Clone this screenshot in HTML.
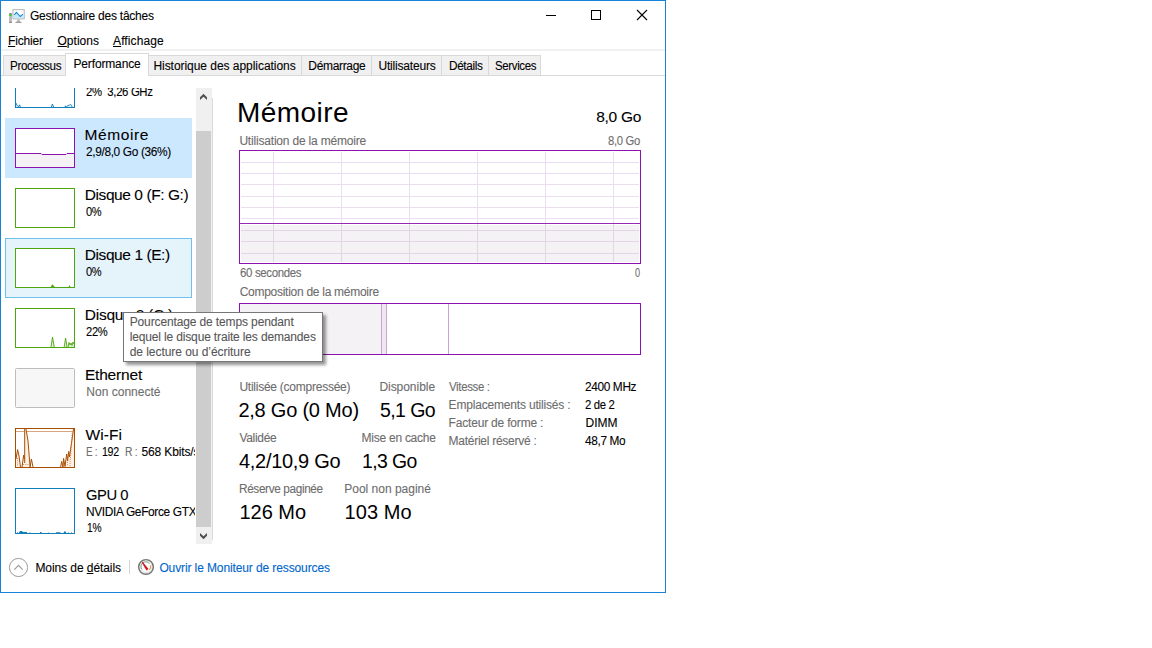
<!DOCTYPE html>
<html lang="fr">
<head>
<meta charset="utf-8">
<title>Gestionnaire des tâches</title>
<style>
html,body{margin:0;padding:0;background:#fff;}
body{width:1152px;height:648px;overflow:hidden;position:relative;font-family:"Liberation Sans",sans-serif;font-size:12px;color:#000;}
.t{position:absolute;white-space:nowrap;line-height:1;transform-origin:0 0;-webkit-text-stroke:0.1px;}
.t u{text-decoration-thickness:1px;text-underline-offset:1px;}
.abs{position:absolute;}
#win{position:absolute;left:0;top:0;width:664px;height:591px;border:1px solid #1883d7;background:#fff;}
.tab{position:absolute;top:55px;height:20px;border:1px solid #d9d9d9;border-bottom:none;background:#f0f0f0;}
.thumb{position:absolute;left:15px;width:58px;height:38px;border:1px solid;background:#fff;overflow:hidden;}
#list{position:absolute;left:1px;top:88px;width:194px;height:456px;overflow:hidden;}
#listin{position:absolute;left:-1px;top:-88px;width:300px;height:700px;}
svg{position:absolute;overflow:visible;}
</style>
</head>
<body>
<div id="win"></div>

<!-- title bar icon -->
<svg style="left:8px;top:8px;" width="18" height="16" viewBox="0 0 18 16">
 <rect x="1" y="5" width="3" height="10" rx="0.8" fill="#bdbdbd"/>
 <rect x="1" y="13.8" width="3" height="1.2" rx="0.4" fill="#8c8c8c"/>
 <rect x="1.5" y="5.2" width="2" height="1.2" fill="#7d7188"/>
 <rect x="1.3" y="6.4" width="2.4" height="1.7" fill="#22d41c"/>
 <rect x="4.3" y="1" width="12.6" height="10.6" rx="0.8" fill="#c2c2c2"/>
 <rect x="5.6" y="2.2" width="10" height="8" fill="#fff"/>
 <path d="M5.6 6.6L6.6 6.4L8.4 4.2L12.3 8.6L14.8 6.3L15.6 6.3V10.2H5.6Z" fill="#c3ebfc"/>
 <path d="M5.9 6.6L6.8 6.3L8.4 4.3L12.3 8.5L14.9 6.2" fill="none" stroke="#1d86cf" stroke-width="1.1"/>
 <rect x="9.4" y="11.6" width="2.2" height="2" fill="#ababab"/>
 <path d="M7 15C7.6 13.7 9 13.3 10.5 13.3S13.4 13.7 14 15Z" fill="#a3a3a3"/>
</svg>
<!-- window controls -->
<svg style="left:540px;top:5px;" width="120" height="22" viewBox="0 0 120 22">
 <path d="M6 10.5H16" stroke="#000" stroke-width="1" fill="none"/>
 <rect x="51.5" y="5.5" width="9" height="9" stroke="#000" stroke-width="1" fill="none"/>
 <path d="M97 5L107 15M107 5L97 15" stroke="#000" stroke-width="1.1" fill="none"/>
</svg>

<!-- menu separator -->
<div class="abs" style="left:1px;top:49px;width:664px;height:2px;background:#f1f1f1;"></div>

<!-- tabs -->
<div class="tab" style="left:3px;width:62px;"></div>
<div class="tab" style="left:148px;width:152px;"></div>
<div class="tab" style="left:301px;width:69px;"></div>
<div class="tab" style="left:371px;width:69px;"></div>
<div class="tab" style="left:441px;width:46px;"></div>
<div class="tab" style="left:488px;width:51px;"></div>
<div class="abs" style="left:1px;top:75px;width:664px;height:1px;background:#d9d9d9;"></div>
<div class="tab" style="left:65px;top:53px;width:82px;height:22px;background:#fff;"></div>

<!-- left list -->
<div id="list"><div id="listin">
 <div class="abs" style="left:5px;top:118px;width:187px;height:60px;background:#cce8ff;"></div>
 <div class="abs" style="left:5px;top:238px;width:185px;height:58px;background:#e5f3fb;border:1px solid #70c0e7;"></div>
 <!-- CPU -->
 <div class="thumb" style="top:68px;border-color:#117dbb;">
  <svg width="58" height="38" viewBox="0 0 58 38"><path d="M0 34L0.8 36L2 37.4L2.8 37.4L3.6 35.8L4.5 38.5H35L36.4 35L37.8 38.5H49L49.4 36.8L49.8 38.5L51 37.4L52 36.5L53.3 36.3L54.4 35.2L55.5 36.5L56.5 38.5H58V38H0Z" fill="#dcebf5"/><path d="M0 34L0.8 36L2 37.4L2.8 37.4L3.6 35.8L4.5 38.5H35L36.4 35L37.8 38.5H49L49.4 36.8L49.8 38.5L51 37.4L52 36.5L53.3 36.3L54.4 35.2L55.5 36.5L56.5 38.5H58" fill="none" stroke="#117dbb" stroke-width="0.9"/></svg>
 </div>
 <!-- Memory -->
 <div class="thumb" style="top:128px;border-color:#8b12ae;">
  <svg width="58" height="38" viewBox="0 0 58 38"><path d="M0 38V24.5H25L26 25.5H50L51 24.5H58V38Z" fill="#f4f2f4"/><path d="M0 24.5H25L26 25.5H50L51 24.5H58" fill="none" stroke="#8b12ae" stroke-width="1"/></svg>
 </div>
 <!-- Disk 0 -->
 <div class="thumb" style="top:188px;border-color:#4da60c;"></div>
 <!-- Disk 1 -->
 <div class="thumb" style="top:248px;border-color:#4da60c;">
  <svg width="58" height="38" viewBox="0 0 58 38"><path d="M35 38L36.3 35.6L38.5 38ZM52.8 38L53.5 36.6L54.2 38Z" fill="#4da60c" stroke="#4da60c" stroke-width="0.5"/></svg>
 </div>
 <!-- Disk 2 -->
 <div class="thumb" style="top:308px;border-color:#4da60c;">
  <svg width="58" height="38" viewBox="0 0 58 38"><path d="M35 38L36.5 28L38.2 38ZM48.2 38L49.6 29L51 38ZM52 38L53 33.5L54 36L55 34L56 36.5L57 33L58 35V38Z" fill="#dcefd0"/><path d="M35 38L36.5 28L38.2 38M48.2 38L49.6 29L51 38M52 38L53 33.5L54 36L55 34L56 36.5L57 33L58 35" fill="none" stroke="#4da60c" stroke-width="0.9"/></svg>
 </div>
 <!-- Ethernet -->
 <div class="thumb" style="top:368px;border-color:#bdbdbd;background:#f7f7f7;border-radius:1.5px;"></div>
 <!-- Wi-Fi -->
 <div class="thumb" style="top:428px;border-color:#a74f01;">
  <svg width="58" height="38" viewBox="0 0 58 38">
   <path d="M0 2.5H56" stroke="#d8a780" stroke-width="1" fill="none"/>
   <path d="M0 38V30L1.6 20.6L3 27L4.5 38ZM6 38L7.7 26L8.7 26V0H10L12 12L14.1 38ZM45 38L45.7 32.4L47 38L47.6 29.4L49 37L50.7 25L51.6 32L52.7 22.4L53.5 28L57.5 0H58V38Z" fill="#fcf1e7"/>
   <path d="M0 30L1.6 20.6L3 27L4.5 38M6 38L7.7 26L8.3 30M8.7 0V34M10 0L12 12L14.1 38L15.4 30L17 38M44.6 38L45.7 32.4L47 38L47.6 29.4L49 37.5L50.7 25L51.6 32L52.7 22.4L53.5 28L57.5 0" fill="none" stroke="#a74f01" stroke-width="1"/>
   <path d="M53.9 37L56.4 1" fill="none" stroke="#e0703a" stroke-width="0.8" stroke-dasharray="1 1"/>
   <path d="M1.5 29V37M7 35.5H14M51.5 33V37" fill="none" stroke="#e0703a" stroke-width="0.8" stroke-dasharray="1 1.2"/>
  </svg>
 </div>
 <!-- GPU -->
 <div class="thumb" style="top:488px;height:44px;border-color:#117dbb;">
  <svg width="58" height="44" viewBox="0 0 58 44"><path d="M1 44L1.5 42.8L2 44ZM3 44L3.6 42.6L4 42H6.5V43H11V44ZM13.4 44L14 43L14.6 44ZM24 44V43H25.5V44ZM32 44L32.4 43L32.8 44ZM40 44V43.2H44.5V44ZM47.4 44L48.5 42.2L50 42.8V43.4L50.5 44ZM52 44L52.5 43L53 44ZM55 44L55.5 43L56 44Z" fill="#117dbb"/></svg>
 </div>
<div class="t" id="c1" style="left:84.82px;top:67.08px;font-size:15.5px;letter-spacing:-0.480px;color:#000;transform:scaleX(0.9765);">Processeur</div>
<div class="t" id="c2" style="left:86.10px;top:86.04px;font-size:12.0px;letter-spacing:-0.360px;color:#000;transform:scaleX(0.9457);">2%&nbsp; 3,26 GHz</div>
<div class="t" id="i1" style="left:84.50px;top:127.08px;font-size:15.5px;letter-spacing:0.588px;color:#000;">Mémoire</div>
<div class="t" id="j1" style="left:86.00px;top:146.04px;font-size:12.0px;letter-spacing:-0.360px;color:#000;transform:scaleX(0.9909);">2,9/8,0 Go (36%)</div>
<div class="t" id="i2" style="left:84.80px;top:187.08px;font-size:15.5px;letter-spacing:-0.426px;color:#000;">Disque 0 (F: G:)</div>
<div class="t" id="j2" style="left:86.00px;top:206.04px;font-size:12.0px;letter-spacing:-0.360px;color:#000;transform:scaleX(0.9241);">0%</div>
<div class="t" id="i3" style="left:84.80px;top:247.08px;font-size:15.5px;letter-spacing:-0.424px;color:#000;">Disque 1 (E:)</div>
<div class="t" id="j3" style="left:86.00px;top:266.04px;font-size:12.0px;letter-spacing:-0.360px;color:#000;transform:scaleX(0.9241);">0%</div>
<div class="t" id="i4" style="left:84.80px;top:307.08px;font-size:15.5px;letter-spacing:-0.245px;color:#000;">Disque 2 (C:)</div>
<div class="t" id="j4" style="left:86.00px;top:326.04px;font-size:12.0px;letter-spacing:-0.360px;color:#000;transform:scaleX(0.9311);">22%</div>
<div class="t" id="i5" style="left:84.90px;top:367.08px;font-size:15.5px;letter-spacing:-0.184px;color:#000;">Ethernet</div>
<div class="t" id="j5" style="left:86.30px;top:386.04px;font-size:12.0px;letter-spacing:0.011px;color:#6d6d6d;">Non connecté</div>
<div class="t" id="i6" style="left:85.50px;top:427.08px;font-size:15.5px;letter-spacing:0.099px;color:#000;">Wi-Fi</div>
<div class="t" id="i7" style="left:85.50px;top:487.08px;font-size:15.5px;letter-spacing:-0.480px;color:#000;transform:scaleX(0.9539);">GPU 0</div>
<div class="t" id="j7" style="left:86.30px;top:506.04px;font-size:12.0px;letter-spacing:-0.360px;color:#000;transform:scaleX(0.9946);">NVIDIA GeForce GTX 1060</div>
<div class="t" id="k7" style="left:86.90px;top:522.04px;font-size:12.0px;letter-spacing:-0.360px;color:#000;transform:scaleX(0.8548);">1%</div>
<div class="t" id="w1" style="left:86.30px;top:446.04px;font-size:12.0px;letter-spacing:-0.360px;color:#6d6d6d;transform:scaleX(0.8224);">E :</div>
<div class="t" id="w2" style="left:102.30px;top:446.04px;font-size:12.0px;letter-spacing:-0.360px;color:#000;transform:scaleX(0.8865);">192</div>
<div class="t" id="w3" style="left:124.50px;top:446.04px;font-size:12.0px;letter-spacing:-0.360px;color:#6d6d6d;transform:scaleX(0.8543);">R :</div>
<div class="t" id="w4" style="left:141.50px;top:446.04px;font-size:12.0px;letter-spacing:-0.137px;color:#000;">568 Kbits/s</div>
</div></div>

<!-- scrollbar -->
<div class="abs" style="left:196px;top:88px;width:16px;height:456px;background:#f0f0f0;"></div>
<div class="abs" style="left:212px;top:98px;width:1px;height:442px;background:#dadada;"></div>
<div class="abs" style="left:196px;top:131px;width:15px;height:396px;background:#cdcdcd;"></div>
<svg style="left:196px;top:88px;" width="16" height="456" viewBox="0 0 16 456">
 <path d="M4 9.3L7.5 5.8L11 9.3V12L7.5 8.8L4 12Z" fill="#505050"/>
 <path d="M4 445L7.5 448.2L11 445V447.7L7.5 451.2L4 447.7Z" fill="#505050"/>
</svg>

<!-- main graph -->
<svg style="left:239px;top:150px;" width="402" height="114" viewBox="0 0 402 114">
 <rect x="0.5" y="0.5" width="401" height="113" fill="#fff"/>
 <rect x="2" y="75" width="398" height="37" fill="#f4f2f4"/>
 <g stroke="#ecdef0" stroke-width="1" fill="none">
  <path d="M2 12.5H400M2 23.5H400M2 34.5H400M2 46.5H400M2 57.5H400M2 68.5H400"/>
  <path d="M34.5 2V73M102.5 2V73M170.5 2V73M238.5 2V73M306.5 2V73M374.5 2V73"/>
 </g>
 <g stroke="#e2d6e6" stroke-width="1" fill="none">
  <path d="M2 80.5H400M2 91.5H400M2 103.5H400"/>
  <path d="M34.5 74V112M102.5 74V112M170.5 74V112M238.5 74V112M306.5 74V112M374.5 74V112"/>
 </g>
 <path d="M1 73.5H401" stroke="#9528b4" stroke-width="1" fill="none"/>
 <rect x="0.5" y="0.5" width="401" height="113" fill="none" stroke="#8b12ae" stroke-width="1"/>
</svg>

<!-- composition bar -->
<svg style="left:239px;top:303px;" width="402" height="52" viewBox="0 0 402 52">
 <rect x="0.5" y="0.5" width="401" height="51" fill="#fff"/>
 <rect x="1" y="1" width="141.5" height="50" fill="#f4f2f4"/>
 <rect x="142.5" y="1" width="5" height="50" fill="#efe8f1"/>
 <path d="M142.5 0V52M147.5 0V52M209.5 0V52" stroke="#caa2d9" stroke-width="1" fill="none"/>
 <rect x="0.5" y="0.5" width="401" height="51" fill="none" stroke="#8b12ae" stroke-width="1"/>
</svg>

<!-- bottom bar -->
<svg style="left:8px;top:557px;" width="150" height="22" viewBox="0 0 150 22">
 <circle cx="10.5" cy="10.5" r="9.1" fill="#fff" stroke="#9c9c9c" stroke-width="1"/>
 <path d="M6.3 12.6L10.5 8.4L14.7 12.6" fill="none" stroke="#9c9c9c" stroke-width="1.2"/>
 <path d="M121.5 3V17" stroke="#d4d4d4" stroke-width="1"/>
 <circle cx="138" cy="10" r="7.3" fill="#f6f4f1" stroke="#747474" stroke-width="1.5"/>
 <circle cx="138" cy="9.6" r="5.9" fill="#fdfdfd" stroke="#d8d8d8" stroke-width="0.7"/>
 <path d="M134 12.4A4.3 4.3 0 0 1 141.4 6.6" fill="none" stroke="#6f9a78" stroke-width="0.9"/>
 <path d="M142.3 8.4A4.4 4.4 0 0 1 141.4 12.9" fill="none" stroke="#f08a28" stroke-width="1"/>
 <path d="M133.7 5.3L134.6 4.7L140.5 12L138.4 13.5Z" fill="#d3141c"/>
</svg>

<!-- tooltip -->
<div class="abs" style="left:123px;top:312px;width:198px;height:48px;background:#fff;border:1px solid #767676;box-shadow:3px 3px 3px rgba(0,0,0,0.42);"></div>

<div class="t" id="title" style="left:30.00px;top:10.04px;font-size:12.0px;letter-spacing:-0.250px;color:#000;">Gestionnaire des tâches</div>
<div class="t" id="m1" style="left:8.00px;top:35.04px;font-size:12.0px;letter-spacing:-0.168px;color:#000;"><u>F</u>ichier</div>
<div class="t" id="m2" style="left:57.50px;top:35.04px;font-size:12.0px;letter-spacing:0.024px;color:#000;"><u>O</u>ptions</div>
<div class="t" id="m3" style="left:113.00px;top:35.04px;font-size:12.0px;letter-spacing:0.107px;color:#000;"><u>A</u>ffichage</div>
<div class="t" id="tb1" style="left:9.50px;top:60.04px;font-size:12.0px;letter-spacing:-0.360px;color:#000;transform:scaleX(0.9691);">Processus</div>
<div class="t" id="tb2" style="left:73.50px;top:58.04px;font-size:12.0px;letter-spacing:-0.152px;color:#000;">Performance</div>
<div class="t" id="tb3" style="left:153.40px;top:60.04px;font-size:12.0px;letter-spacing:-0.043px;color:#000;">Historique des applications</div>
<div class="t" id="tb4" style="left:308.30px;top:60.04px;font-size:12.0px;letter-spacing:-0.331px;color:#000;">Démarrage</div>
<div class="t" id="tb5" style="left:378.40px;top:60.04px;font-size:12.0px;letter-spacing:-0.177px;color:#000;">Utilisateurs</div>
<div class="t" id="tb6" style="left:448.70px;top:60.04px;font-size:12.0px;letter-spacing:-0.360px;color:#000;transform:scaleX(0.9820);">Détails</div>
<div class="t" id="tb7" style="left:495.00px;top:60.04px;font-size:12.0px;letter-spacing:-0.360px;color:#000;transform:scaleX(0.9542);">Services</div>
<div class="t" id="h1" style="left:237.00px;top:98.50px;font-size:28.0px;letter-spacing:0.444px;color:#000;-webkit-text-stroke:0;">Mémoire</div>
<div class="t" id="h2" style="left:596.30px;top:109.08px;font-size:15.5px;letter-spacing:-0.302px;color:#000;">8,0 Go</div>
<div class="t" id="l1" style="left:239.40px;top:135.04px;font-size:12.0px;letter-spacing:-0.188px;color:#6d6d6d;">Utilisation de la mémoire</div>
<div class="t" id="l2" style="left:607.90px;top:135.04px;font-size:12.0px;letter-spacing:-0.360px;color:#6d6d6d;transform:scaleX(0.9407);">8,0 Go</div>
<div class="t" id="l3" style="left:239.70px;top:267.04px;font-size:12.0px;letter-spacing:-0.360px;color:#6d6d6d;transform:scaleX(0.9542);">60 secondes</div>
<div class="t" id="l4" style="left:635.30px;top:267.04px;font-size:12.0px;letter-spacing:0.000px;color:#6d6d6d;transform:scaleX(0.7571);">0</div>
<div class="t" id="l5" style="left:239.70px;top:286.04px;font-size:12.0px;letter-spacing:-0.275px;color:#6d6d6d;">Composition de la mémoire</div>
<div class="t" id="s1" style="left:239.40px;top:381.04px;font-size:12.0px;letter-spacing:-0.247px;color:#6d6d6d;">Utilisée (compressée)</div>
<div class="t" id="s2" style="left:379.40px;top:381.04px;font-size:12.0px;letter-spacing:-0.040px;color:#6d6d6d;">Disponible</div>
<div class="t" id="v1" style="left:238.40px;top:400.27px;font-size:20.0px;letter-spacing:-0.227px;color:#000;-webkit-text-stroke:0;">2,8 Go (0 Mo)</div>
<div class="t" id="v2" style="left:379.90px;top:400.27px;font-size:20.0px;letter-spacing:-0.600px;color:#000;transform:scaleX(0.9751);-webkit-text-stroke:0;">5,1 Go</div>
<div class="t" id="s3" style="left:239.40px;top:432.04px;font-size:12.0px;letter-spacing:-0.311px;color:#6d6d6d;">Validée</div>
<div class="t" id="s4" style="left:361.60px;top:432.04px;font-size:12.0px;letter-spacing:-0.258px;color:#6d6d6d;">Mise en cache</div>
<div class="t" id="v3" style="left:239.00px;top:451.27px;font-size:20.0px;letter-spacing:-0.300px;color:#000;-webkit-text-stroke:0;">4,2/10,9 Go</div>
<div class="t" id="v4" style="left:361.63px;top:451.27px;font-size:20.0px;letter-spacing:-0.600px;color:#000;transform:scaleX(0.9711);-webkit-text-stroke:0;">1,3 Go</div>
<div class="t" id="s5" style="left:239.40px;top:483.04px;font-size:12.0px;letter-spacing:-0.360px;color:#6d6d6d;transform:scaleX(0.9813);">Réserve paginée</div>
<div class="t" id="s6" style="left:344.30px;top:483.04px;font-size:12.0px;letter-spacing:-0.012px;color:#6d6d6d;">Pool non paginé</div>
<div class="t" id="v5" style="left:239.40px;top:502.27px;font-size:20.0px;letter-spacing:0.003px;color:#000;-webkit-text-stroke:0;">126 Mo</div>
<div class="t" id="v6" style="left:344.60px;top:502.27px;font-size:20.0px;letter-spacing:0.063px;color:#000;-webkit-text-stroke:0;">103 Mo</div>
<div class="t" id="d1" style="left:448.60px;top:381.04px;font-size:12.0px;letter-spacing:-0.360px;color:#6d6d6d;transform:scaleX(0.9557);">Vitesse :</div>
<div class="t" id="d2" style="left:448.60px;top:399.04px;font-size:12.0px;letter-spacing:-0.182px;color:#6d6d6d;">Emplacements utilisés :</div>
<div class="t" id="d3" style="left:448.60px;top:417.04px;font-size:12.0px;letter-spacing:-0.189px;color:#6d6d6d;">Facteur de forme :</div>
<div class="t" id="d4" style="left:448.60px;top:435.04px;font-size:12.0px;letter-spacing:-0.268px;color:#6d6d6d;">Matériel réservé :</div>
<div class="t" id="e1" style="left:585.20px;top:381.04px;font-size:12.0px;letter-spacing:-0.360px;color:#000;transform:scaleX(0.9871);">2400 MHz</div>
<div class="t" id="e2" style="left:585.20px;top:399.04px;font-size:12.0px;letter-spacing:-0.360px;color:#000;transform:scaleX(0.9439);">2 de 2</div>
<div class="t" id="e3" style="left:585.60px;top:417.04px;font-size:12.0px;letter-spacing:0.001px;color:#000;">DIMM</div>
<div class="t" id="e4" style="left:585.20px;top:435.04px;font-size:12.0px;letter-spacing:-0.360px;color:#000;transform:scaleX(0.9873);">48,7 Mo</div>
<div class="t" id="b1" style="left:35.40px;top:562.04px;font-size:12.0px;letter-spacing:-0.074px;color:#000;">Moins de <u>d</u>étails</div>
<div class="t" id="b2" style="left:159.40px;top:562.04px;font-size:12.0px;letter-spacing:-0.112px;color:#0066cc;">Ouvrir le Moniteur de ressources</div>
<div class="t" id="tt1" style="left:129.70px;top:316.04px;font-size:12.0px;letter-spacing:-0.127px;color:#575757;">Pourcentage de temps pendant</div>
<div class="t" id="tt2" style="left:129.70px;top:331.04px;font-size:12.0px;letter-spacing:-0.150px;color:#575757;">lequel le disque traite les demandes</div>
<div class="t" id="tt3" style="left:129.70px;top:346.04px;font-size:12.0px;letter-spacing:-0.052px;color:#575757;">de lecture ou d’écriture</div>
</body>
</html>
